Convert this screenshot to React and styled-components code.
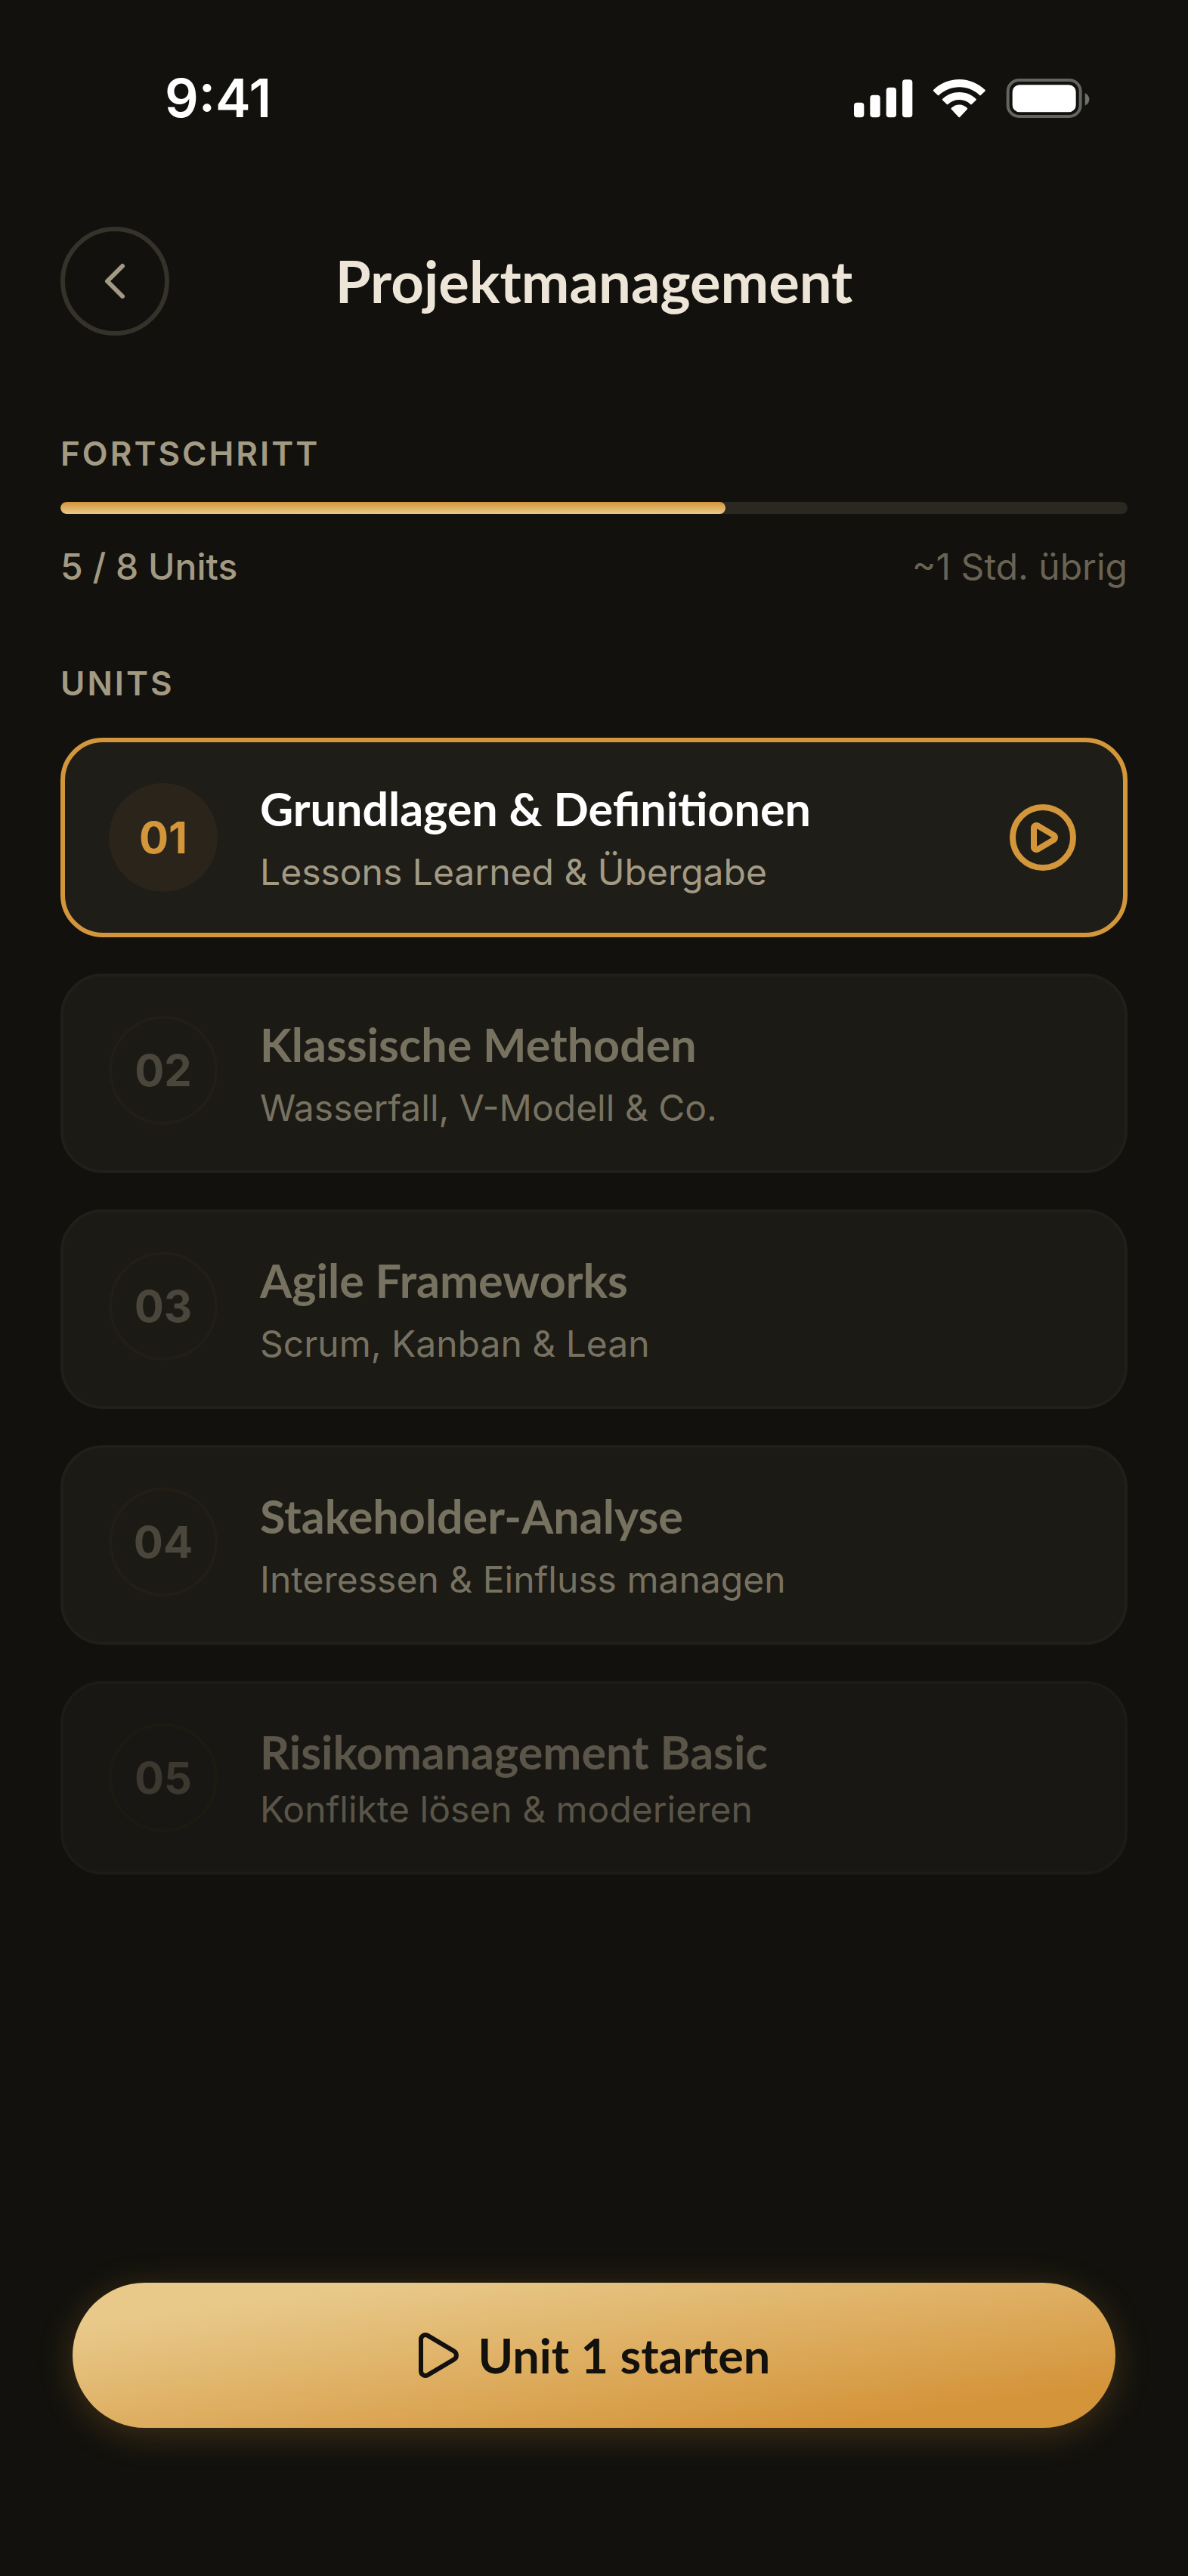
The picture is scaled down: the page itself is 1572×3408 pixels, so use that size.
import React from "react";
import styled, { createGlobalStyle, css } from "styled-components";

const UNITS = [
  { no: "01", title: "Grundlagen & Definitionen", text: "Lessons Learned & Übergabe", state: "active" },
  { no: "02", title: "Klassische Methoden", text: "Wasserfall, V-Modell & Co.", state: "locked" },
  { no: "03", title: "Agile Frameworks", text: "Scrum, Kanban & Lean", state: "locked" },
  { no: "04", title: "Stakeholder-Analyse", text: "Interessen & Einfluss managen", state: "locked" },
  { no: "05", title: "Risikomanagement Basic", text: "Konflikte lösen & moderieren", state: "faded" },
];

// colours per card state
const STATES = {
  active: { bg: "#1e1d18", line: "#d4963a", title: "#ffffff", text: "#a39a84", no: "#d4963a" },
  locked: { bg: "#1b1a15", line: "#201f1b", title: "#777160", text: "#777160", no: "#4a463b", ring: "#231e15" },
  faded: { bg: "#181713", line: "#1c1b17", title: "#5a5548", text: "#5a5548", no: "#3c372f", ring: "#1c1b12" },
};

const DONE = 5;
const TOTAL = 8;
const PERCENT = 62.3;

function StatusIcons() {
  return (
    <svg width="312" height="52" viewBox="118 101 936 156" fill="#fff" aria-hidden="true">
      <rect x="118" y="196" width="40" height="59" rx="12" />
      <rect x="182" y="166" width="40" height="89" rx="12" />
      <rect x="246" y="136" width="40" height="119" rx="12" />
      <rect x="310" y="105" width="40" height="150" rx="12" />
      <path d="M536 135c30 0 58 11 80 31q3 3 6 0l16-15q3-3 0-6c-28-26-64-41-102-41s-74 15-102 41q-3 3 0 6l16 15q3 3 6 0c22-20 50-31 80-31z" />
      <path d="M536 185c16 0 32 6 44 17q3 3 6 0l16-15q3-3 0-6c-18-17-41-26-66-26s-48 9-66 26q-3 3 0 6l16 15q3 3 6 0c12-11 28-17 44-17z" />
      <path d="M567 217q3 3 0 6l-28 30q-3 3-6 0l-28-30q-3-3 0-6c18-17 44-17 62 0z" />
      <rect x="729" y="107" width="288" height="144" rx="44" fill="none" stroke="#fff" strokeWidth="12" opacity="0.35" />
      <path d="M1035 159v49c10-4 17-14 17-24.500s-7-20.500-17-24.500z" opacity="0.4" />
      <rect x="747" y="126" width="252" height="108" rx="28" />
    </svg>
  );
}

function UnitCard({ unit }) {
  return (
    <StyledCard $state={unit.state}>
      <StyledNumber $state={unit.state}>{unit.no}</StyledNumber>
      <StyledCardBody $tight={unit.state === "faded"}>
        <StyledCardTitle $state={unit.state}>{unit.title}</StyledCardTitle>
        <StyledCardText $state={unit.state}>{unit.text}</StyledCardText>
      </StyledCardBody>
      {unit.state === "active" &&
        <StyledPlayButton type="button" aria-label={"Unit " + unit.no + " abspielen"}>
          <svg width="88" height="88" viewBox="0 0 88 88" fill="none" stroke="currentColor" strokeWidth="8" strokeLinejoin="round">
            <circle cx="44" cy="44" r="40" />
            <path d="M32 31.500v25a3.500 3.500 0 0 0 5.200 3.100l21-12.500a3.600 3.600 0 0 0 0-6.200l-21-12.500a3.500 3.500 0 0 0-5.200 3.100z" />
          </svg>
        </StyledPlayButton>
      }
    </StyledCard>
  );
}

function App() {
  return (
    <StyledScreen>
      <GlobalStyle />
      <StyledStatusBar>
        <StyledTime>9:41</StyledTime>
        <StatusIcons />
      </StyledStatusBar>

      <StyledHeader>
        <StyledBackButton type="button" aria-label="Zurück">
          <svg width="32" height="52" viewBox="0 0 32 52" fill="none" stroke="currentColor" strokeWidth="6" strokeLinecap="round" strokeLinejoin="round">
            <path d="M26 6L6 26l20 20" />
          </svg>
        </StyledBackButton>
        <StyledTitle>Projektmanagement</StyledTitle>
      </StyledHeader>

      <StyledMain>
        <section>
          <StyledLabel>FORTSCHRITT</StyledLabel>
          <StyledTrack role="progressbar" aria-label="Fortschritt" aria-valuenow={DONE} aria-valuemin={0} aria-valuemax={TOTAL}>
            <StyledFill style={{ width: PERCENT + "%" }} />
          </StyledTrack>
          <StyledMeta>
            <StyledDone>{DONE} / {TOTAL} Units</StyledDone>
            <StyledRest>~1 Std. übrig</StyledRest>
          </StyledMeta>
        </section>

        <section>
          <StyledLabel>UNITS</StyledLabel>
          <StyledList>
            {UNITS.map((unit) => <UnitCard key={unit.no} unit={unit} />)}
          </StyledList>
        </section>
      </StyledMain>

      <StyledFooter>
        <StyledStartButton type="button">
          <svg width="56" height="64" viewBox="0 0 56 64" fill="none" stroke="currentColor" strokeWidth="6" strokeLinejoin="round">
            <path d="M4 11v42a6 6 0 0 0 9 5.200l34.500-20.500a6.500 6.500 0 0 0 0-11.400L13 5.800A6 6 0 0 0 4 11z" />
          </svg>
          Unit 1 starten
        </StyledStartButton>
      </StyledFooter>
    </StyledScreen>
  );
}

const GlobalStyle = createGlobalStyle`
  * {
    box-sizing: border-box;
  }
  body {
    margin: 0;
    background: #12110d;
  }
  button {
    font: inherit;
    padding: 0;
    border: none;
    background: none;
    cursor: pointer;
  }
  svg {
    display: block;
    flex: none;
  }
`;

const heading = css`
  margin: 0;
  font-family: Lato, sans-serif;
  font-weight: 700;
`;

const StyledScreen = styled.div`
  display: flex;
  flex-direction: column;
  min-height: 100vh;
  background: #12110d;
  color: #a39a84;
  font-family: Inter, sans-serif;
  font-size: 48px;
  line-height: 60px;
`;

const StyledStatusBar = styled.div`
  display: flex;
  align-items: center;
  justify-content: space-between;
  height: 260px;
  padding: 0 130px 0 218px;
`;

const StyledTime = styled.span`
  color: #ffffff;
  font-size: 70px;
  font-weight: 600;
`;

const StyledHeader = styled.header`
  display: grid;
  grid-template-columns: 144px 1fr 144px;
  align-items: center;
  padding: 40px 80px 0;
`;

const StyledBackButton = styled.button`
  display: flex;
  align-items: center;
  justify-content: center;
  width: 144px;
  height: 144px;
  border: 6px solid #35322a;
  border-radius: 50%;
  color: #a39a84;
`;

const StyledTitle = styled.h1`
  ${heading}
  color: #ede6d8;
  font-size: 76px;
  line-height: 92px;
  text-align: center;
`;

const StyledMain = styled.main`
  display: flex;
  flex-direction: column;
  gap: 96px;
  padding: 128px 80px 0;
`;

const StyledLabel = styled.h2`
  margin: 0;
  font-size: 44px;
  font-weight: 600;
  line-height: 56px;
  letter-spacing: 3px;
`;

const StyledTrack = styled.div`
  height: 16px;
  margin-top: 36px;
  border-radius: 8px;
  background: #2b2822;
  overflow: hidden;
`;

const StyledFill = styled.div`
  height: 100%;
  border-radius: 8px;
  background: linear-gradient(#d4943a, #e8c98a);
`;

const StyledMeta = styled.div`
  display: flex;
  justify-content: space-between;
  margin-top: 40px;
`;

const StyledDone = styled.span`
  font-weight: 500;
`;

const StyledRest = styled.span`
  color: #6a6354;
`;

const StyledList = styled.ul`
  display: flex;
  flex-direction: column;
  gap: 48px;
  margin: 44px 0 0;
  padding: 0;
  list-style: none;
`;

const StyledCard = styled.li`
  display: flex;
  align-items: ${(props) => (props.$state === "active" ? "center" : "flex-start")};
  gap: 56px;
  padding: ${(props) => (props.$state === "active" ? "50px 62px 50px 58px" : "52px 60px")};
  border: ${(props) => (props.$state === "active" ? "6px" : "4px")} solid ${(props) => STATES[props.$state].line};
  border-radius: 56px;
  background: ${(props) => STATES[props.$state].bg};
`;

const StyledNumber = styled.span`
  display: flex;
  flex: none;
  align-items: center;
  justify-content: center;
  width: 144px;
  height: 144px;
  border-radius: 50%;
  color: ${(props) => STATES[props.$state].no};
  font-size: 58px;
  font-weight: 700;
  ${(props) => (props.$state === "active"
    ? css`background: #2b241a;`
    : css`border: 4px solid ${STATES[props.$state].ring};`)}
`;

const StyledCardBody = styled.div`
  display: flex;
  flex: 1;
  flex-direction: column;
  gap: ${(props) => (props.$tight ? "8px" : "16px")};
`;

const StyledCardTitle = styled.h3`
  ${heading}
  color: ${(props) => STATES[props.$state].title};
  font-size: 61px;
  line-height: 76px;
`;

const StyledCardText = styled.p`
  margin: 0;
  color: ${(props) => STATES[props.$state].text};
  font-weight: 400;
`;

const StyledPlayButton = styled.button`
  color: #d4963a;
`;

const StyledFooter = styled.footer`
  margin-top: auto;
  padding: 96px 96px 196px;
`;

const StyledStartButton = styled.button`
  display: flex;
  align-items: center;
  justify-content: center;
  gap: 24px;
  width: 100%;
  height: 192px;
  border-radius: 96px;
  background: linear-gradient(to bottom right, #e8c98a 15%, #d4943a 85%);
  box-shadow: 0 8px 48px rgba(212, 150, 58, 0.24);
  color: #12110d;
  && {
    font-family: Lato, sans-serif;
    font-size: 63px;
    font-weight: 700;
  }
`;

export default App;
